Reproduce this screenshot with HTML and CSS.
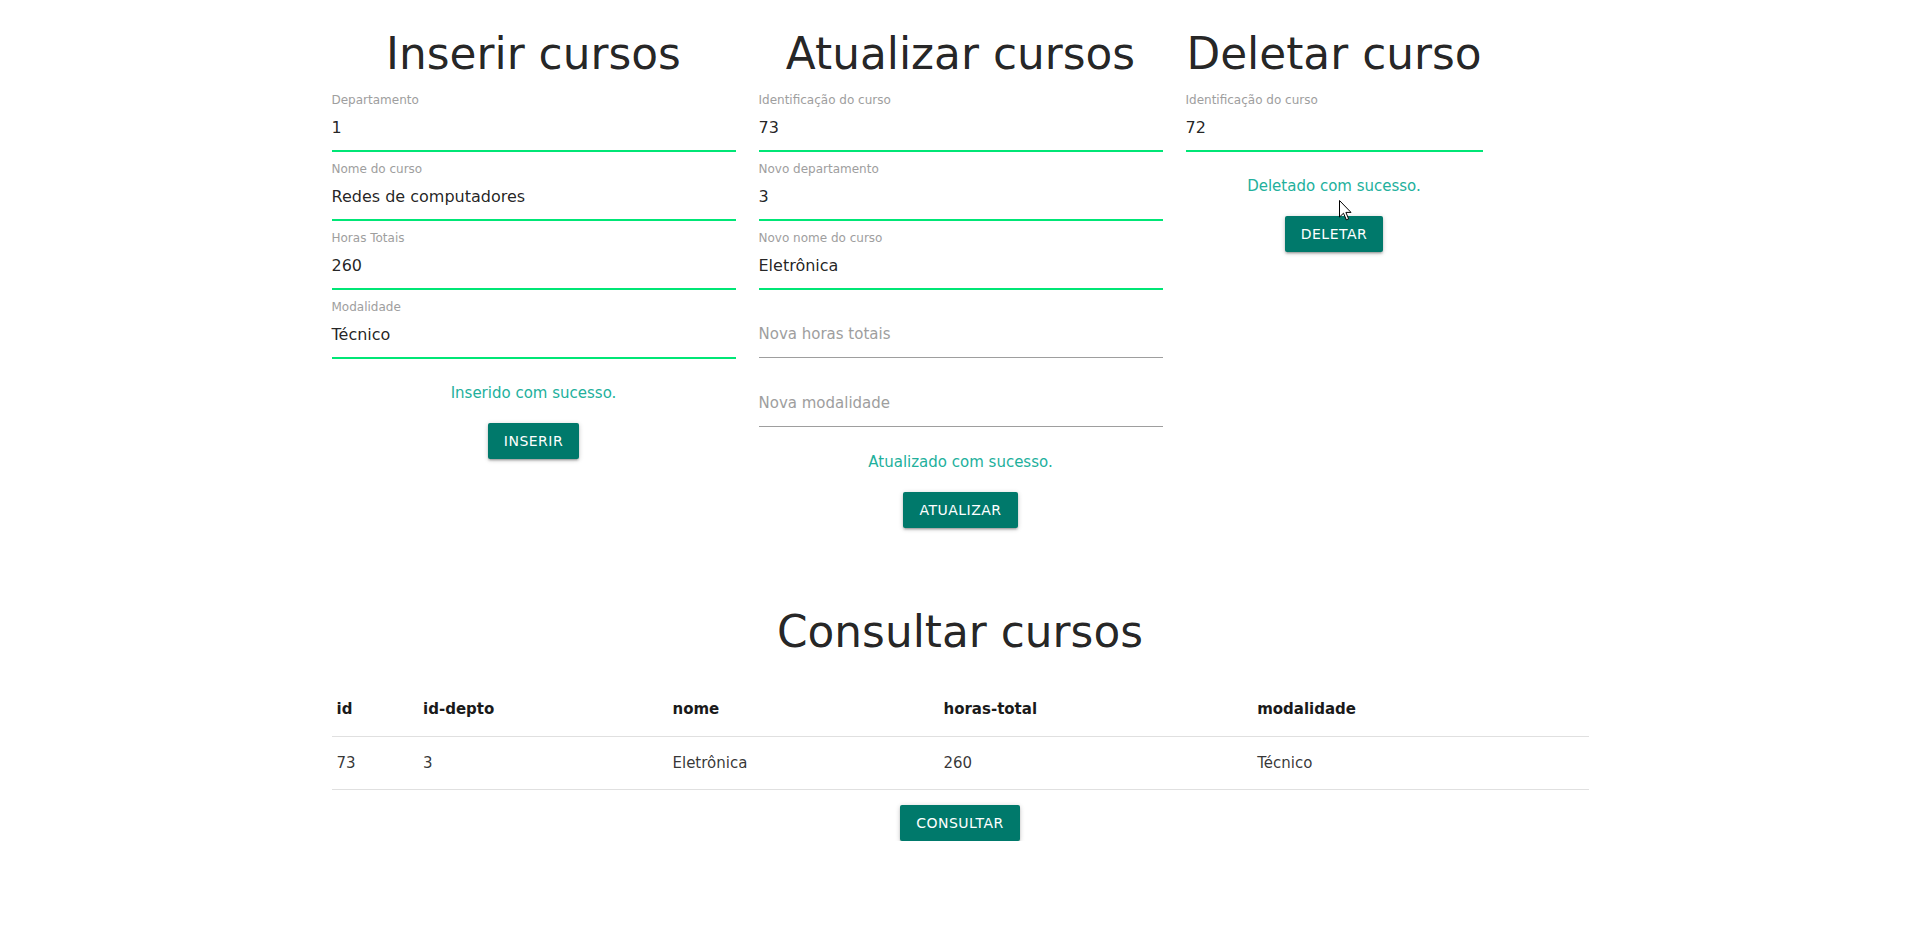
FILE: index.html
```html
<!DOCTYPE html>
<html lang="pt-BR">
<head>
<meta charset="utf-8">
<title>Cursos</title>
<link rel="stylesheet" href="styles.css">
</head>
<body>
<div class="page">
  <div class="forms">
    <section class="panel">
      <h2 class="title">Inserir cursos</h2>
      <div class="field filled"><div class="field-label">Departamento</div><div class="field-value">1</div></div>
      <div class="field filled"><div class="field-label">Nome do curso</div><div class="field-value">Redes de computadores</div></div>
      <div class="field filled"><div class="field-label">Horas Totais</div><div class="field-value">260</div></div>
      <div class="field filled"><div class="field-label">Modalidade</div><div class="field-value">Técnico</div></div>
      <p class="msg">Inserido com sucesso.</p>
      <div class="btn-wrap"><button class="btn">Inserir</button></div>
    </section>
    <section class="panel">
      <h2 class="title">Atualizar cursos</h2>
      <div class="field filled"><div class="field-label">Identificação do curso</div><div class="field-value">73</div></div>
      <div class="field filled"><div class="field-label">Novo departamento</div><div class="field-value">3</div></div>
      <div class="field filled"><div class="field-label">Novo nome do curso</div><div class="field-value">Eletrônica</div></div>
      <div class="field"><div class="field-label"></div><div class="field-value placeholder">Nova horas totais</div></div>
      <div class="field"><div class="field-label"></div><div class="field-value placeholder">Nova modalidade</div></div>
      <p class="msg">Atualizado com sucesso.</p>
      <div class="btn-wrap"><button class="btn">Atualizar</button></div>
    </section>
    <section class="panel">
      <h2 class="title">Deletar curso</h2>
      <div class="field filled"><div class="field-label">Identificação do curso</div><div class="field-value">72</div></div>
      <p class="msg">Deletado com sucesso.</p>
      <div class="btn-wrap"><button class="btn">Deletar</button></div>
    </section>
  </div>

  <section class="query">
    <h2 class="title">Consultar cursos</h2>
    <table class="table">
      <colgroup>
        <col class="c-id"><col class="c-dep"><col class="c-nome"><col class="c-horas"><col class="c-mod">
      </colgroup>
      <thead>
        <tr><th>id</th><th>id-depto</th><th>nome</th><th>horas-total</th><th>modalidade</th></tr>
      </thead>
      <tbody>
        <tr><td>73</td><td>3</td><td>Eletrônica</td><td>260</td><td>Técnico</td></tr>
      </tbody>
    </table>
    <div class="btn-wrap query-btn"><button class="btn">Consultar</button></div>
  </section>
</div>

<svg class="cursor" width="13" height="21" viewBox="0 0 13 21" xmlns="http://www.w3.org/2000/svg">
  <path d="M0.5 0.5 L0.5 17 L4.5 13.2 L7.3 19.8 L9.6 18.8 L6.9 12.4 L12 12.4 Z" fill="#fff" stroke="#000" stroke-width="1" stroke-linejoin="miter"/>
</svg>
</body>
</html>
```

FILE: styles.css
```css
html, body {
  margin: 0;
  padding: 0;
  background: #ffffff;
}

body {
  font-family: "DejaVu Sans", "Liberation Sans", sans-serif;
  color: rgba(0, 0, 0, 0.87);
  font-size: 15px;
  line-height: 1.5;
}

.page {
  width: 1257px;
  margin: 0 auto;
}

.forms {
  display: grid;
  grid-template-columns: 404px 404px 297px;
  column-gap: 23px;
  align-items: start;
}

.title {
  font-size: 43.8px;
  font-weight: 400;
  line-height: 48px;
  margin: 30px 0 4px;
  text-align: center;
  color: rgba(0, 0, 0, 0.87);
}

.field {
  padding: 11px 0 12px;
  border-bottom: 1px solid #9e9e9e;
}

.field.filled {
  border-bottom-color: #00e676;
  box-shadow: 0 1px 0 0 #00e676;
}

.field-label {
  font-size: 12px;
  line-height: 14px;
  height: 14px;
  color: #9e9e9e;
  margin-bottom: 10px;
  white-space: nowrap;
}

.field-value {
  font-size: 16px;
  line-height: 21px;
  height: 21px;
  white-space: nowrap;
}

.field-value.placeholder {
  font-size: 15px;
  color: #9e9e9e;
}

.msg {
  margin: 25px 0 0;
  font-size: 15px;
  line-height: 20px;
  text-align: center;
  color: #22b09c;
}

.btn-wrap {
  display: flex;
  justify-content: center;
  margin-top: 20px;
}

.btn {
  height: 36px;
  line-height: 36px;
  padding: 0 16px;
  border: none;
  border-radius: 2px;
  background: #00796b;
  color: #ffffff;
  font-family: "DejaVu Sans", "Liberation Sans", sans-serif;
  font-size: 14px;
  letter-spacing: 0.5px;
  text-transform: uppercase;
  box-shadow: 0 2px 2px 0 rgba(0, 0, 0, 0.14), 0 3px 1px -2px rgba(0, 0, 0, 0.12), 0 1px 5px 0 rgba(0, 0, 0, 0.2);
  cursor: pointer;
}

.query .title {
  margin: 80px 0 27px;
}

.table {
  width: 100%;
  border-collapse: collapse;
  table-layout: fixed;
}

.c-id { width: 86.6px; }
.c-dep { width: 249.4px; }
.c-nome { width: 271px; }
.c-horas { width: 313.7px; }

.table tr {
  border-bottom: 1px solid rgba(0, 0, 0, 0.12);
}

.table th,
.table td {
  padding: 15px 5px;
  text-align: left;
  font-size: 15px;
  line-height: 22.5px;
  white-space: nowrap;
}

.table th {
  font-weight: 700;
  color: #1a1a1a;
}

.table td {
  font-weight: 400;
  color: rgba(0, 0, 0, 0.8);
}

.query-btn {
  margin-top: 15px;
}

.cursor {
  position: absolute;
  left: 1339px;
  top: 200px;
}
```
